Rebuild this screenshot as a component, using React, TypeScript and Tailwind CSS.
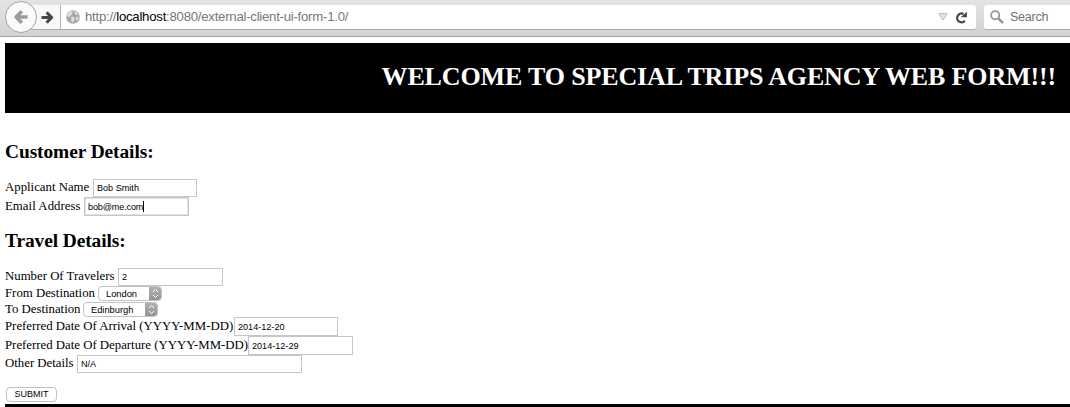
import React from "react";

const inputBase =
  "box-border border border-[#c6c6c8] bg-white pl-[3px] font-['Liberation_Sans',Arial,sans-serif] text-[9.1px] text-black outline-none rounded-none";

function Label({ className, children }: { className: string; children: React.ReactNode }) {
  return <label className={`block shrink-0 whitespace-nowrap ${className}`}>{children}</label>;
}

function Picker({ className, value }: { className: string; value: string }) {
  return (
    <div className={`flex h-[15px] items-stretch overflow-hidden rounded-[4px] border border-[#c3c3c3] bg-white ${className}`}>
      <span className="flex-1 pl-[7px] font-['Liberation_Sans',Arial,sans-serif] text-[9.3px] leading-[14px]">{value}</span>
      <span className="-my-px -mr-px flex w-[13px] items-center justify-center bg-gradient-to-b from-[#b3b3b3] to-[#929292]">
        <svg width="7" height="11" viewBox="0 0 7 11" fill="none" stroke="#fff" strokeWidth="1">
          <path d="M1 4 3.5 1.5 6 4M1 7 3.5 9.5 6 7" />
        </svg>
      </span>
    </div>
  );
}

function Toolbar() {
  return (
    <header className="flex h-[37px] items-start border-b border-[#a5a5a5] bg-gradient-to-b from-[#e4e4e4] to-[#d3d3d3] font-['Liberation_Sans',Arial,sans-serif]">
      <div className="relative z-10 ml-[5px] mt-px flex h-8 w-8 shrink-0 items-center justify-center rounded-full border border-[#a2a2a2] bg-[#fafafa]">
        <svg className="-ml-px" width="16" height="16" viewBox="0 0 16 16" fill="none" stroke="#9b9b9b" strokeWidth="3.4" strokeLinejoin="round">
          <path d="M8.8 2.2 3 8l5.8 5.8M3.5 8H14.6" />
        </svg>
      </div>
      <div className="-ml-[6px] mt-[5px] flex h-[25px] w-[945px] shrink-0 items-center rounded-r-[3px] border-b border-[#aaa] bg-white">
        <div className="flex h-full w-[30px] shrink-0 items-center justify-end border-r border-[#b0b0b0] bg-[#f8f8f8] pr-[6px]">
          <svg width="13" height="13" viewBox="0 0 13 13" fill="none" stroke="#484848" strokeWidth="3" strokeLinejoin="round">
            <path d="M5.6 1.4 10.7 6.5 5.6 11.6M.5 6.5h10" />
          </svg>
        </div>
        <svg className="ml-[5px] shrink-0" width="14" height="14" viewBox="0 0 14 14">
          <circle cx="7" cy="7" r="6.8" fill="#a8a8a8" />
          <path d="M1 5 3 2.2 6.2.9 7 2 5.6 3.2 6.5 4.4 4.3 5.6 3.7 7 1.8 6.7ZM8.5 1 11 2.2 12 4.2 10.2 5 8.7 3.7ZM5 7l2.2-.3L9 8.2 8.1 10 6.6 12.8 5.2 11 5.4 9ZM10 7l2.8-.3-.9 3-1.5 1Z" fill="#dedede" />
        </svg>
        <span className="ml-[5px] whitespace-nowrap text-[13.2px] tracking-[-0.25px] text-[#777]">
          http://<span className="text-black">localhost</span>:8080/external-client-ui-form-1.0/
        </span>
        <svg className="ml-auto" width="10" height="8" viewBox="0 0 10 8">
          <path d="M.7.7h8.6L5 7Z" fill="#e4e4e4" stroke="#bbb" />
        </svg>
        <svg className="ml-[7px] mr-[8px]" width="13" height="13" viewBox="0 0 13 13">
          <path d="M9.9 9.8A4.4 4.4 0 1 1 8.6 3" fill="none" stroke="#484848" strokeWidth="2.3" />
          <path d="M11.9.6V6.2H6.3V5.4L8 4.2 10 2.4Z" fill="#484848" />
        </svg>
      </div>
      <div className="ml-2 mt-[5px] flex h-[25px] flex-1 items-center rounded-l-[3px] border-b border-[#aaa] bg-white">
        <svg className="ml-[6px]" width="14" height="14" viewBox="0 0 14 14" fill="none" stroke="#979797">
          <circle cx="5.2" cy="5.2" r="4.1" strokeWidth="1.9" />
          <path d="m8.3 8.3 4.7 4.7" strokeWidth="2.5" />
        </svg>
        <span className="ml-[6px] pt-px text-[12.5px] tracking-[-0.25px] text-[#717171]">Search</span>
      </div>
    </header>
  );
}

export default function App() {
  return (
    <div className="h-[407px] w-full overflow-hidden bg-white font-['Liberation_Serif','Times_New_Roman',serif] text-black">
      <Toolbar />
      <main className="ml-[5px] pt-[6px]">
        <div className="flex h-[70px] items-center justify-end bg-black pr-[14px]">
          <h1 className="whitespace-nowrap pb-[3px] text-[26px] font-bold leading-[30px] tracking-[-0.14px] text-white">
            WELCOME TO SPECIAL TRIPS AGENCY WEB FORM!!!
          </h1>
        </div>
        <form className="text-[12.8px] leading-[16px]" onSubmit={(e) => e.preventDefault()}>
          <h2 className="mt-[27px] h-[39px] text-[19.4px] font-bold leading-[24px] tracking-[-0.08px]">Customer Details:</h2>
          <div className="flex h-[18px]">
            <Label className="w-[88px]">Applicant Name</Label>
            <input className={`${inputBase} h-[18px] w-[104px]`} defaultValue="Bob Smith" />
          </div>
          <div className="flex h-[19px]">
            <Label className="w-[79px] pt-px tracking-[0.05px]">Email Address</Label>
            <div className={`${inputBase} flex h-[19px] w-[105px] items-center tracking-[-0.15px] shadow-[inset_0_0_0_1px_#e2e2e9]`}>
              bob@me.com<span className="h-[11px] w-px bg-black" />
            </div>
          </div>
          <h2 className="mt-[13px] h-[39px] text-[19.4px] font-bold leading-[24px] tracking-[-0.08px]">Travel Details:</h2>
          <div className="flex h-[18px]">
            <Label className="w-[113px]">Number Of Travelers</Label>
            <input className={`${inputBase} h-[18px] w-[105px]`} defaultValue="2" />
          </div>
          <div className="flex h-4">
            <Label className="w-[93px] -mt-px">From Destination</Label>
            <Picker className="w-[64px]" value="London" />
          </div>
          <div className="flex h-[15px]">
            <Label className="w-[78px] -mt-px">To Destination</Label>
            <Picker className="w-[75px]" value="Edinburgh" />
          </div>
          <div className="flex h-[19px]">
            <Label className="w-[229px] pt-px">Preferred Date Of Arrival (YYYY-MM-DD)</Label>
            <input className={`${inputBase} h-[19px] w-[104px]`} defaultValue="2014-12-20" />
          </div>
          <div className="flex h-[19px]">
            <Label className="w-[243px] pt-px">Preferred Date Of Departure (YYYY-MM-DD)</Label>
            <input className={`${inputBase} h-[19px] w-[105px]`} defaultValue="2014-12-29" />
          </div>
          <div className="flex h-[18px]">
            <Label className="w-[72px]">Other Details</Label>
            <input className={`${inputBase} h-[18px] w-[225px]`} defaultValue="N/A" />
          </div>
          <button className="ml-px mt-[14px] block h-[15px] w-[51px] rounded-[4px] border border-[#c2c2c2] bg-white text-center font-['Liberation_Sans',Arial,sans-serif] text-[9px] leading-[13px]">
            SUBMIT
          </button>
        </form>
        <div className="mt-[2px] h-[3px] bg-black" />
      </main>
    </div>
  );
}
